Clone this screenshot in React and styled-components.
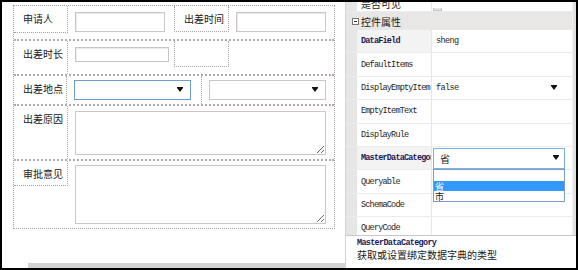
import styled, { createGlobalStyle } from 'styled-components'

const GlobalStyle = createGlobalStyle`
  html, body { margin: 0; padding: 0; background: #fff; }
  * { box-sizing: border-box; }
`

const Frame = styled.div`
  width: 578px;
  height: 270px;
  border: 2px solid #000;
  display: flex;
  overflow: hidden;
  background: #fff;
  font-family: "Noto Sans CJK SC", sans-serif;
  color: #1a1a1a;
`

/* ---------- left: form designer ---------- */
const LeftPane = styled.div`
  width: 343px;
  display: flex;
  flex-direction: column;
  padding: 3px 0 0 11px;
`

const FormTable = styled.div`
  width: 322px;
  border: 1px dotted #a8a2a2;
`

const FormRow = styled.div`
  display: flex;
  height: ${p => p.$h}px;
  border-bottom: ${p => (p.$last ? 'none' : '2px dotted #b0aaaa')};
`

const LabelCell = styled.div`
  width: 54px;
  height: ${p => (p.$h ? `${p.$h}px` : 'auto')};
  padding: 6px 0 0 9px;
  font-size: 10px;
  line-height: 14px;
  border-right: 1px dotted #a8a2a2;
  border-bottom: ${p => (p.$h ? '1px dotted #a8a2a2' : 'none')};
  align-self: ${p => (p.$h ? 'flex-start' : 'stretch')};
  white-space: nowrap;
`

const FieldCell = styled.div`
  width: ${p => (p.$w ? `${p.$w}px` : 'auto')};
  flex: ${p => (p.$w ? 'none' : '1')};
  padding: ${p => p.$pt}px 8px 0 7px;
  border-left: ${p => (p.$sep ? '1px dotted #a8a2a2' : 'none')};
`

const SubLabel = styled.div`
  width: 55px;
  height: 26px;
  padding: 6px 0 0 9px;
  font-size: 10px;
  line-height: 14px;
  border-left: 1px dotted #a8a2a2;
  border-right: 1px dotted #a8a2a2;
  border-bottom: 1px dotted #a8a2a2;
  white-space: nowrap;
`

const TextBox = styled.div`
  width: ${p => p.$w}px;
  height: ${p => p.$h}px;
  border: 1px solid #cbc6c6;
  box-shadow: inset 1px 1px 0 #eeeaea;
  background: #fff;
`

const SelectBox = styled.div`
  width: ${p => p.$w}px;
  height: 20px;
  border: 1px solid ${p => (p.$focus ? '#6d9ed0' : '#cbc6c6')};
  background: #fff;
  display: flex;
  align-items: center;
  justify-content: flex-end;
  padding-right: 7px;
`

const Triangle = styled.span`
  width: 0;
  height: 0;
  border-left: 3px solid transparent;
  border-right: 3px solid transparent;
  border-top: 4px solid #111;
  position: relative;
  &::before {
    content: '';
    position: absolute;
    left: -3px;
    top: -5px;
    width: 6px;
    height: 1px;
    background: #111;
  }
`

const AreaBox = styled.textarea`
  display: block;
  width: 251px;
  height: ${p => p.$h}px;
  border: 1px solid #cbc6c6;
  resize: both;
  margin: 0;
  padding: 0;
  outline: none;
  overflow: hidden;
`

const HScroll = styled.div`
  margin-top: auto;
  margin-left: 15px;
  height: 5px;
  background: #d4d4d4;
`

/* ---------- right: property grid ---------- */
const RightPane = styled.div`
  width: 231px;
  display: flex;
  flex-direction: column;
  border-left: 1px solid #c4d6ec;
`

const GridArea = styled.div`
  height: 233px;
  display: flex;
  overflow: hidden;
`

const Grid = styled.div`
  flex: 1;
  margin-top: -13px;
  position: relative;
`

const VScroll = styled.div`
  width: 4px;
  border-left: 1px solid #f2f2f2;
  background: #e2e2e2;
`

const CategoryRow = styled.div`
  height: 18px;
  display: flex;
  align-items: center;
  background: #e9e7e5;
  font-size: 10px;
  padding-left: 6px;
  gap: 2px;
`

const Toggle = styled.span`
  width: 7px;
  height: 7px;
  border: 1px solid #777;
  position: relative;
  background: #fff;
  &::after {
    content: '';
    position: absolute;
    left: 1px;
    right: 1px;
    top: 2px;
    height: 1px;
    background: #333;
  }
`

const PropRow = styled.div`
  height: ${p => p.$h || 23.4}px;
  display: flex;
  border-bottom: 1px solid #ececec;
  position: relative;
`

const Gutter = styled.div`
  width: 11px;
  background: #e6e6e6;
`

const NameCell = styled.div`
  width: 75px;
  padding-left: 4px;
  display: flex;
  align-items: ${p => (p.$cjk ? 'flex-end' : 'center')};
  overflow: hidden;
  white-space: nowrap;
  border-right: 1px solid #e6e6e6;
  background: ${p => (p.$bold ? '#f3f3f3' : '#fff')};
  font-family: ${p => (p.$cjk ? '"Noto Sans CJK SC", sans-serif' : '"Liberation Mono", monospace')};
  font-size: ${p => (p.$cjk ? '10px' : '8.5px')};
  letter-spacing: ${p => (p.$cjk ? '0' : '-0.8px')};
  font-weight: ${p => (p.$bold ? 700 : 400)};
  color: ${p => (p.$bold ? '#22195a' : '#1e1e1e')};
  line-height: 14px;
`

const ValueCell = styled.div`
  flex: 1;
  padding: 0 15px 0 4px;
  display: flex;
  align-items: center;
  justify-content: space-between;
  font-family: "Liberation Mono", monospace;
  font-size: 8.5px;
  letter-spacing: -0.6px;
  color: #1e1e1e;
  position: relative;
`

const MiniCheck = styled.span`
  align-self: flex-end;
  width: 9px;
  height: 3px;
  margin-left: -3px;
  border: 1px solid #c2c2c2;
  border-top: none;
  background: #e4e4e4;
`

const ValueSelect = styled.div`
  position: absolute;
  left: 1px;
  top: 1px;
  width: 132px;
  height: 21px;
  border: 1px solid #7eb0e4;
  background: #fff;
  display: flex;
  align-items: center;
  justify-content: space-between;
  padding: 0 5px 0 6px;
  font-family: "Noto Sans CJK SC", sans-serif;
  font-size: 10px;
`

const DropList = styled.div`
  position: absolute;
  left: 1px;
  top: 100%;
  width: 132px;
  border: 1px solid #7c9ccf;
  background: #fff;
  z-index: 2;
  padding: 1px 0 0;
`

const Option = styled.div`
  height: 10px;
  display: flex;
  align-items: center;
  padding-left: 1px;
  overflow: hidden;
  font-family: "Noto Sans CJK SC", sans-serif;
  font-size: 9px;
  line-height: 9px;
  background: ${p => (p.$active ? '#3399ff' : '#fff')};
  color: ${p => (p.$active ? '#fff' : '#222')};
`

const Description = styled.div`
  flex: 1;
  border-top: 1px solid #c6c6c6;
  padding: 2px 0 0 11px;
`

const DescTitle = styled.div`
  font-family: "Liberation Mono", monospace;
  font-size: 8.5px;
  letter-spacing: -0.7px;
  font-weight: 700;
  color: #22195a;
  line-height: 11px;
`

const DescText = styled.div`
  font-size: 10px;
  line-height: 12px;
  color: #1a1a1a;
`

const props = [
  { name: 'DataField', bold: true, value: 'sheng' },
  { name: 'DefaultItems' },
  { name: 'DisplayEmptyItem', value: 'false', arrow: true },
  { name: 'EmptyItemText' },
  { name: 'DisplayRule' },
  { name: 'MasterDataCategory', bold: true, select: true },
  { name: 'Queryable' },
  { name: 'SchemaCode' },
  { name: 'QueryCode' },
]

export default function App() {
  return (
    <>
      <GlobalStyle />
      <Frame>
        <LeftPane>
          <FormTable>
            <FormRow $h={35}>
              <LabelCell $h={27}>申请人</LabelCell>
              <FieldCell $w={106} $pt={6}>
                <TextBox $w={90} $h={20} />
              </FieldCell>
              <SubLabel>出差时间</SubLabel>
              <FieldCell $pt={6}>
                <TextBox $w={90} $h={20} />
              </FieldCell>
            </FormRow>
            <FormRow $h={35}>
              <LabelCell>出差时长</LabelCell>
              <FieldCell $w={106} $pt={6}>
                <TextBox $w={94} $h={15} />
              </FieldCell>
              <SubLabel />
              <FieldCell $pt={6} />
            </FormRow>
            <FormRow $h={30}>
              <LabelCell>出差地点</LabelCell>
              <FieldCell $w={134} $pt={4}>
                <SelectBox $w={117} $focus><Triangle /></SelectBox>
              </FieldCell>
              <FieldCell $sep $pt={4}>
                <SelectBox $w={117}><Triangle /></SelectBox>
              </FieldCell>
            </FormRow>
            <FormRow $h={55}>
              <LabelCell>出差原因</LabelCell>
              <FieldCell $pt={5}>
                <AreaBox $h={44} readOnly />
              </FieldCell>
            </FormRow>
            <FormRow $h={67} $last>
              <LabelCell $h={25}>审批意见</LabelCell>
              <FieldCell $pt={4}>
                <AreaBox $h={59} readOnly />
              </FieldCell>
            </FormRow>
          </FormTable>
          <HScroll />
        </LeftPane>

        <RightPane>
          <GridArea>
            <Grid>
              <PropRow $h={23}>
                <Gutter />
                <NameCell $cjk>是否可见</NameCell>
                <ValueCell>
                  <MiniCheck />
                </ValueCell>
              </PropRow>
              <CategoryRow>
                <Toggle />
                <span>控件属性</span>
              </CategoryRow>
              {props.map(p => (
                <PropRow key={p.name}>
                  <Gutter />
                  <NameCell $bold={p.bold}>{p.name}</NameCell>
                  <ValueCell>
                    <span>{p.value}</span>
                    {p.arrow && <Triangle />}
                    {p.select && (
                      <>
                        <ValueSelect>
                          <span>省</span>
                          <Triangle />
                        </ValueSelect>
                        <DropList>
                          <Option />
                          <Option $active>省</Option>
                          <Option>市</Option>
                        </DropList>
                      </>
                    )}
                  </ValueCell>
                </PropRow>
              ))}
            </Grid>
            <VScroll />
          </GridArea>
          <Description>
            <DescTitle>MasterDataCategory</DescTitle>
            <DescText>获取或设置绑定数据字典的类型</DescText>
          </Description>
        </RightPane>
      </Frame>
    </>
  )
}
